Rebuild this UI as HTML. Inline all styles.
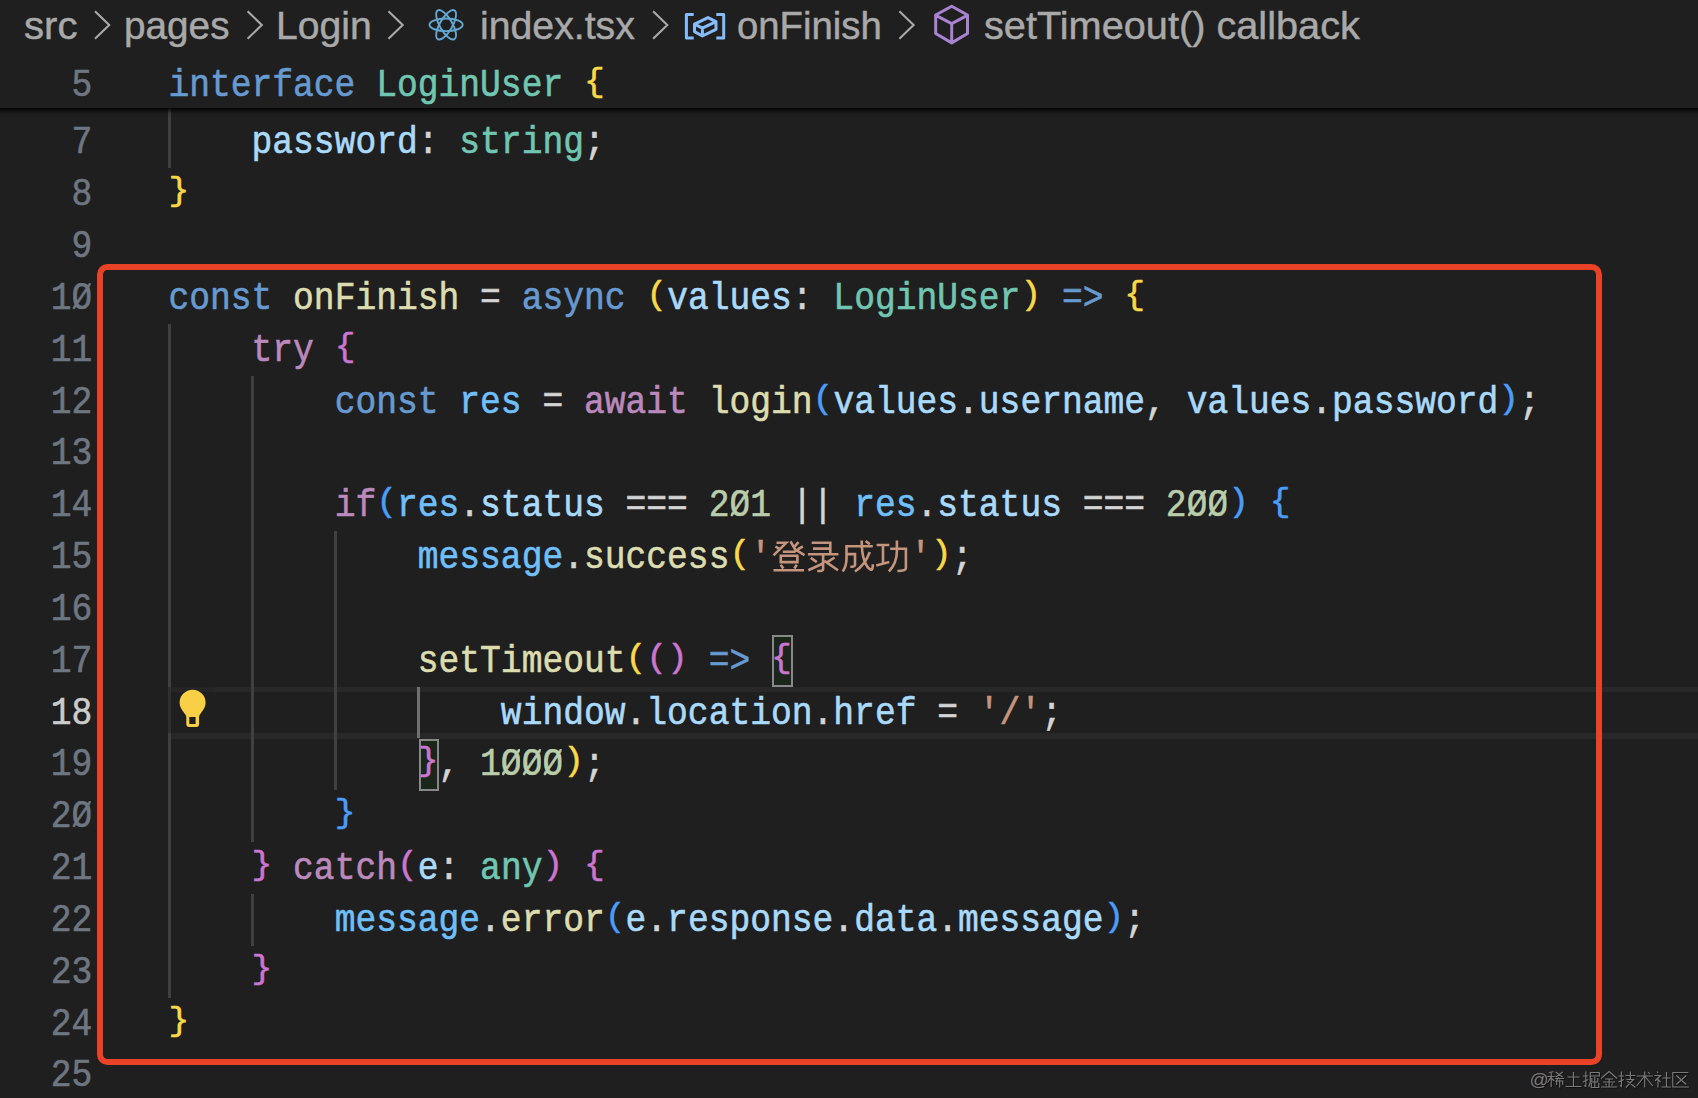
<!DOCTYPE html>
<html><head><meta charset="utf-8">
<style>
html,body{margin:0;padding:0;width:1698px;height:1098px;overflow:hidden;background:#1f1f1f;}
body{position:relative;}
.ln{position:absolute;left:168.4px;height:51.83px;line-height:51.83px;white-space:pre;font-family:"Liberation Mono",monospace;font-size:34.63px;color:#d4d4d4;-webkit-text-stroke:0.55px;transform-origin:0 34px;transform:translateY(1.7px) scaleY(1.1);}
.num{position:absolute;left:0;width:92.3px;text-align:right;height:51.83px;line-height:51.83px;white-space:pre;font-family:"Liberation Mono",monospace;font-size:34.63px;color:#6e7681;-webkit-text-stroke:0.55px;transform-origin:0 34px;transform:translateY(1.7px) scaleY(1.1);}
.num.act{color:#cccccc;}
.z{display:inline-block;clip-path:inset(11.6px 1.6px 16.1px 1.1px);}
.br{display:inline-block;transform-origin:50% -1.07px;transform:scaleY(0.876);}
.ig{position:absolute;width:3px;background:#404040;}
.ig.act{background:#707070;}
.cjk{display:inline-block;width:139.2px;height:10px;position:relative;}
.cjk svg{position:absolute;left:0;top:-30px;}
.hl{position:absolute;left:171px;right:0;top:686.54px;height:47.23px;border-top:5.2px solid #282828;border-bottom:6px solid #282828;box-sizing:border-box;height:52.43px;}
.bm{position:absolute;box-sizing:border-box;border:2px solid #888888;background:rgba(0,100,0,0.10);}
.sticky{position:absolute;left:0;top:0;width:1698px;height:108.4px;background:#1f1f1f;}
.shadow{position:absolute;left:0;top:108.4px;width:1698px;height:10px;background:linear-gradient(to bottom, rgba(0,0,0,0.85) 0px, rgba(0,0,0,0.6) 2px, rgba(0,0,0,0.15) 5px, rgba(0,0,0,0) 10px);}
.bc{position:absolute;top:0;height:56px;line-height:56px;white-space:pre;font-family:"Liberation Sans",sans-serif;font-size:38px;color:#a9a9a9;-webkit-text-stroke:0.45px;}
.red{position:absolute;left:96.8px;top:263.9px;width:1505.3px;height:801.1px;box-sizing:border-box;border:6.6px solid #e94226;border-radius:10.5px;}
</style></head><body>
<div class="hl"></div>

<div class="ig" style="left:168.00px;top:108.00px;height:60.24px"></div><div class="ig" style="left:168.00px;top:323.73px;height:673.79px"></div><div class="ig" style="left:251.12px;top:375.56px;height:466.47px"></div><div class="ig" style="left:251.12px;top:893.86px;height:51.83px"></div><div class="ig" style="left:334.24px;top:531.05px;height:259.15px"></div>
<div class="ig act" style="left:417.36px;top:686.54px;height:51.83px"></div>
<div style="position:absolute;left:168px;top:686.8px;width:3.2px;height:46px;background:#303030"></div>
<div style="position:absolute;left:171.2px;top:686.8px;width:42.7px;height:4.8px;background:#252525"></div>
<div class="bm" style="left:772.42px;top:635.21px;width:20.1px;height:52px"></div>
<div class="bm" style="left:418.96px;top:738.87px;width:20.1px;height:52px"></div>
<div class="num" style="top:116.41px">7</div><div class="num" style="top:168.24px">8</div><div class="num" style="top:220.07px">9</div><div class="num" style="top:271.90px">1<span class="z">Ø</span></div><div class="num" style="top:323.73px">11</div><div class="num" style="top:375.56px">12</div><div class="num" style="top:427.39px">13</div><div class="num" style="top:479.22px">14</div><div class="num" style="top:531.05px">15</div><div class="num" style="top:582.88px">16</div><div class="num" style="top:634.71px">17</div><div class="num act" style="top:686.54px">18</div><div class="num" style="top:738.37px">19</div><div class="num" style="top:790.20px">2<span class="z">Ø</span></div><div class="num" style="top:842.03px">21</div><div class="num" style="top:893.86px">22</div><div class="num" style="top:945.69px">23</div><div class="num" style="top:997.52px">24</div><div class="num" style="top:1049.35px">25</div><div class="ln" style="top:116.41px">    <span style="color:#aadafa">password</span><span style="color:#d4d4d4">:</span> <span style="color:#71c6b1">string</span><span style="color:#d4d4d4">;</span></div><div class="ln" style="top:168.24px"><span class="br" style="color:#f9d849">}</span></div><div class="ln" style="top:271.90px"><span style="color:#679ad1">const</span> <span style="color:#dcdcaf">onFinish</span><span style="color:#d4d4d4"> = </span><span style="color:#679ad1">async</span> <span class="br" style="color:#f9d849">(</span><span style="color:#aadafa">values</span><span style="color:#d4d4d4">:</span> <span style="color:#71c6b1">LoginUser</span><span class="br" style="color:#f9d849">)</span> <span style="color:#679ad1">=&gt;</span> <span class="br" style="color:#f9d849">{</span></div><div class="ln" style="top:323.73px">    <span style="color:#bc89bd">try</span> <span class="br" style="color:#cc76d1">{</span></div><div class="ln" style="top:375.56px">        <span style="color:#679ad1">const</span> <span style="color:#6fbff9">res</span><span style="color:#d4d4d4"> = </span><span style="color:#bc89bd">await</span> <span style="color:#dcdcaf">login</span><span class="br" style="color:#4a9df8">(</span><span style="color:#aadafa">values</span><span style="color:#d4d4d4">.</span><span style="color:#aadafa">username</span><span style="color:#d4d4d4">, </span><span style="color:#aadafa">values</span><span style="color:#d4d4d4">.</span><span style="color:#aadafa">password</span><span class="br" style="color:#4a9df8">)</span><span style="color:#d4d4d4">;</span></div><div class="ln" style="top:479.22px">        <span style="color:#bc89bd">if</span><span class="br" style="color:#4a9df8">(</span><span style="color:#6fbff9">res</span><span style="color:#d4d4d4">.</span><span style="color:#aadafa">status</span><span style="color:#d4d4d4"> === </span><span style="color:#bacdab">2<span class="z">Ø</span>1</span><span style="color:#d4d4d4"> || </span><span style="color:#6fbff9">res</span><span style="color:#d4d4d4">.</span><span style="color:#aadafa">status</span><span style="color:#d4d4d4"> === </span><span style="color:#bacdab">2<span class="z">Ø</span><span class="z">Ø</span></span><span class="br" style="color:#4a9df8">)</span> <span class="br" style="color:#4a9df8">{</span></div><div class="ln" style="top:531.05px">            <span style="color:#6fbff9">message</span><span style="color:#d4d4d4">.</span><span style="color:#dcdcaf">success</span><span class="br" style="color:#f9d849">(</span><span style="color:#c5947c">'</span><span class="cjk"></span><span style="color:#c5947c">'</span><span class="br" style="color:#f9d849">)</span><span style="color:#d4d4d4">;</span></div><div class="ln" style="top:634.71px">            <span style="color:#dcdcaf">setTimeout</span><span class="br" style="color:#f9d849">(</span><span class="br" style="color:#cc76d1">()</span> <span style="color:#679ad1">=&gt;</span> <span class="br" style="color:#cc76d1">{</span></div><div class="ln" style="top:686.54px">                <span style="color:#aadafa">window</span><span style="color:#d4d4d4">.</span><span style="color:#aadafa">location</span><span style="color:#d4d4d4">.</span><span style="color:#aadafa">href</span><span style="color:#d4d4d4"> = </span><span style="color:#c5947c">'/'</span><span style="color:#d4d4d4">;</span></div><div class="ln" style="top:738.37px">            <span class="br" style="color:#cc76d1">}</span><span style="color:#d4d4d4">, </span><span style="color:#bacdab">1<span class="z">Ø</span><span class="z">Ø</span><span class="z">Ø</span></span><span class="br" style="color:#f9d849">)</span><span style="color:#d4d4d4">;</span></div><div class="ln" style="top:790.20px">        <span class="br" style="color:#4a9df8">}</span></div><div class="ln" style="top:842.03px">    <span class="br" style="color:#cc76d1">}</span> <span style="color:#bc89bd">catch</span><span class="br" style="color:#cc76d1">(</span><span style="color:#aadafa">e</span><span style="color:#d4d4d4">:</span> <span style="color:#71c6b1">any</span><span class="br" style="color:#cc76d1">)</span> <span class="br" style="color:#cc76d1">{</span></div><div class="ln" style="top:893.86px">        <span style="color:#6fbff9">message</span><span style="color:#d4d4d4">.</span><span style="color:#dcdcaf">error</span><span class="br" style="color:#4a9df8">(</span><span style="color:#aadafa">e</span><span style="color:#d4d4d4">.</span><span style="color:#aadafa">response</span><span style="color:#d4d4d4">.</span><span style="color:#aadafa">data</span><span style="color:#d4d4d4">.</span><span style="color:#aadafa">message</span><span class="br" style="color:#4a9df8">)</span><span style="color:#d4d4d4">;</span></div><div class="ln" style="top:945.69px">    <span class="br" style="color:#cc76d1">}</span></div><div class="ln" style="top:997.52px"><span class="br" style="color:#f9d849">}</span></div>
<div class="sticky">
<span class="bc" style="left:24.1px;transform-origin:0 0;transform:translateY(-1.7px) scaleX(1.057)">src</span>
<span class="bc" style="left:124.1px;transform-origin:0 0;transform:translateY(-1.7px) scaleX(1.019)">pages</span>
<span class="bc" style="left:275.6px;transform-origin:0 0;transform:translateY(-1.7px) scaleX(1.03)">Login</span>
<span class="bc" style="left:480.3px;transform-origin:0 0;transform:translateY(-1.7px) scaleX(1.032)">index.tsx</span>
<span class="bc" style="left:737px;transform-origin:0 0;transform:translateY(-1.7px) scaleX(1.008)">onFinish</span>
<span class="bc" style="left:983.5px;transform-origin:0 0;transform:translateY(-1.7px) scaleX(1.045)">setTimeout() callback</span>
<svg style="position:absolute;left:0;top:0" width="1400" height="56" viewBox="0 0 1400 56">
<g fill="none" stroke="#a9a9a9" stroke-width="2.1" stroke-linecap="butt" stroke-linejoin="miter">
<polyline points="95,11.3 109.2,25 95,38.7"/>
<polyline points="247.6,11.3 261.8,25 247.6,38.7"/>
<polyline points="388.5,11.3 402.7,25 388.5,38.7"/>
<polyline points="653.1,11.3 667.3,25 653.1,38.7"/>
<polyline points="899.4,11.3 913.6,25 899.4,38.7"/>
</g>
<g fill="none" stroke="#62a8d3" stroke-width="1.9">
<ellipse cx="446.1" cy="24.8" rx="16.6" ry="6.3"/>
<ellipse cx="446.1" cy="24.8" rx="16.6" ry="6.3" transform="rotate(60 446.1 24.8)"/>
<ellipse cx="446.1" cy="24.8" rx="16.6" ry="6.3" transform="rotate(-60 446.1 24.8)"/>
</g>
<g fill="none" stroke="#86bcf9" stroke-width="3" stroke-linejoin="round">
<polyline points="693.7,14.6 686.4,14.6 686.4,38.1 693.7,38.1"/>
<polyline points="716.3,14.6 723.7,14.6 723.7,38.1 716.3,38.1"/>
<path d="M694.5,24.2 L708,17.6 L716,21.6 L716,29.4 L702.4,36 L694.5,31.6 Z M694.5,24.2 L702.4,28.2 L716,21.6 M702.4,28.2 L702.4,36"/>
</g>
<g fill="none" stroke="#aa82d2" stroke-width="3" stroke-linejoin="round">
<path d="M951.7,6.2 L935.7,15 L935.7,33.5 L951.7,42.9 L967.5,33.5 L967.5,15 Z M935.9,15.4 L951.7,23.6 L967.3,15.4 M951.7,23.6 L951.7,42.7"/>
</g>
</svg>

<div class="num" style="top:58.80px">5</div>
<div class="ln" style="top:58.80px"><span style="color:#679ad1">interface</span> <span style="color:#71c6b1">LoginUser</span> <span class="br" style="color:#f9d849">{</span></div>
</div>
<div class="shadow"></div>
<svg style="position:absolute;left:170px;top:680px" width="50" height="55" viewBox="0 0 50 55">
<path fill="#f8cf45" fill-rule="evenodd" d="M22.6,9.8 A13,13 0 0 1 35.6,22.8 C35.6,27 33.5,29.5 31.5,32.2 C30,34.2 29.1,35.5 29.1,37 L29.1,44.1 Q29.1,47.1 26.1,47.1 L19.3,47.1 Q16.3,47.1 16.3,44.1 L16.3,37 C16.3,35.5 15.2,34.2 13.7,32.2 C11.7,29.5 9.6,27 9.6,22.8 A13,13 0 0 1 22.6,9.8 Z M19.3,37 L19.3,44.1 L25.6,44.1 L25.6,37 Z"/>
</svg>

<div class="red"></div>
<svg style="position:absolute;left:771px;top:530px" width="140" height="52" viewBox="0 0 140 52">
<g fill="none" stroke="#c5947c" stroke-width="2.6" stroke-linecap="butt" stroke-linejoin="miter">
<path d="M5.5,12.8 H15.2 L2.5,25.4 M4.4,16.5 L9.7,19.6 M19.5,11.4 L24.1,19.4 L33.5,25.1 M27.5,12.2 L22.9,17.3 M31.8,16.5 L26.7,19.4 M11.8,21.8 H24.6"/>
<path d="M8.5,25.8 H27.5 M9.8,25.8 V32.1 H26.4 V25.8 M9.7,34.7 L12.3,38.5 M25.8,34.7 L23.3,38.5 M2.5,40.2 H33"/>
<path d="M40.7,12.8 H59.3 V23.2 M42,18.6 H59.3 M36.9,24.3 H67.4 M52.1,24.3 V39.5 Q52.1,41.2 46.2,41 M39.8,27.9 L45.8,32.1 M51.3,33.8 L37.3,40.2 M63.6,27.5 L56.4,32.1 M53.4,30.9 L67,40.2"/>
<path d="M74.2,16.2 H101.8 M75.5,16.2 V28.7 Q75.5,36 71.7,41.5 M76.8,24.1 H84 V35 Q84,36.8 79.3,36.8 M90.7,10.5 Q90.7,24 93.5,31 Q96,38 100.1,39.8 Q101.8,40 101.8,34.3 M98.8,22 Q94,35 84,41.5 M94.6,10.9 L98.8,14.3"/>
<path d="M105.6,15 H118.3 M112,15 V34.2 M105.2,35.5 L118.3,32.1 M119.2,18.8 H134.9 V38 Q134.9,41 126.4,41 M125.9,10.5 V21 Q125.9,33 117.9,41.5"/>
</g>
</svg>
<svg style="position:absolute;left:1520px;top:1062px" width="178" height="36" viewBox="0 0 178 36">
<g fill="none" stroke-width="1.15" stroke="#000" stroke-opacity="0.55" transform="translate(0.8,1)">
<g transform="translate(26.7,9)"><path d="M2,1.5 L7,0.8 M4.5,1.5 V16 M0.5,5.5 H8 M4.5,6 L0.5,12 M4.5,7 L7.5,10 M9,1 L16,6 M16,1 L9,6 M8.5,7.5 H17.5 M12,6 L9,11 M10,14 V10 H16 V14 M13,8.5 V16.5"/></g>
<g transform="translate(44.5,9)"><path d="M3,6 H15 M9,1 V15.5 M1,15.5 H17"/></g>
<g transform="translate(62.3,9)"><path d="M0.5,5 H6 M3.5,0.5 V15.5 L2,14.5 M0.5,11 L6,8.5 M8,5 H17 V1.5 H8 V11 L6.5,16 M12.5,6 V16.5 M9.5,7 V11 H15.5 V7 M9,12 V16.5 H16.5 V12"/></g>
<g transform="translate(80.1,9)"><path d="M9,0.5 L1,7.5 M9,0.5 L17,7.5 M5,8 H13 M3,11 H15 M1,16 H17 M9,8 V16 M5.5,12.5 L6.5,14.5 M12.5,12.5 L11.5,14.5"/></g>
<g transform="translate(97.9,9)"><path d="M0.5,5 H6 M3.5,0.5 V15.5 L2,14.5 M0.5,11 L6,8.5 M7.5,4.5 H17.5 M12.5,0.5 V8 M8.5,8.5 H15.5 L8,16.5 M9.5,10 L17.5,16.5"/></g>
<g transform="translate(115.7,9)"><path d="M1,5 H17 M9,0.5 V16.5 M8.5,5.5 L1,15 M9.5,5.5 L17,15 M12.5,1 L14,3"/></g>
<g transform="translate(133.5,9)"><path d="M3.5,0.5 L4.5,2 M1,4.5 H7 L1.5,10 M4.5,7 V16.5 M5,9 L7,11 M9,7 H17 M13,1 V15.5 M8,16 H17.5"/></g>
<g transform="translate(151.3,9)"><path d="M17,1.5 H1.5 V16 H17.5 M5,4.5 L15,13.5 M15,4.5 L5,13.5"/></g>
</g>
<g fill="none" stroke-width="1.15" stroke="#7a7a7a">
<g transform="translate(26.7,9)"><path d="M2,1.5 L7,0.8 M4.5,1.5 V16 M0.5,5.5 H8 M4.5,6 L0.5,12 M4.5,7 L7.5,10 M9,1 L16,6 M16,1 L9,6 M8.5,7.5 H17.5 M12,6 L9,11 M10,14 V10 H16 V14 M13,8.5 V16.5"/></g>
<g transform="translate(44.5,9)"><path d="M3,6 H15 M9,1 V15.5 M1,15.5 H17"/></g>
<g transform="translate(62.3,9)"><path d="M0.5,5 H6 M3.5,0.5 V15.5 L2,14.5 M0.5,11 L6,8.5 M8,5 H17 V1.5 H8 V11 L6.5,16 M12.5,6 V16.5 M9.5,7 V11 H15.5 V7 M9,12 V16.5 H16.5 V12"/></g>
<g transform="translate(80.1,9)"><path d="M9,0.5 L1,7.5 M9,0.5 L17,7.5 M5,8 H13 M3,11 H15 M1,16 H17 M9,8 V16 M5.5,12.5 L6.5,14.5 M12.5,12.5 L11.5,14.5"/></g>
<g transform="translate(97.9,9)"><path d="M0.5,5 H6 M3.5,0.5 V15.5 L2,14.5 M0.5,11 L6,8.5 M7.5,4.5 H17.5 M12.5,0.5 V8 M8.5,8.5 H15.5 L8,16.5 M9.5,10 L17.5,16.5"/></g>
<g transform="translate(115.7,9)"><path d="M1,5 H17 M9,0.5 V16.5 M8.5,5.5 L1,15 M9.5,5.5 L17,15 M12.5,1 L14,3"/></g>
<g transform="translate(133.5,9)"><path d="M3.5,0.5 L4.5,2 M1,4.5 H7 L1.5,10 M4.5,7 V16.5 M5,9 L7,11 M9,7 H17 M13,1 V15.5 M8,16 H17.5"/></g>
<g transform="translate(151.3,9)"><path d="M17,1.5 H1.5 V16 H17.5 M5,4.5 L15,13.5 M15,4.5 L5,13.5"/></g>
</g>
<text x="10.3" y="25" font-family="Liberation Sans" font-size="19" fill="#000" fill-opacity="0.5">@</text>
<text x="9.5" y="24" font-family="Liberation Sans" font-size="19" fill="#7a7a7a">@</text>
</svg>

</body></html>
